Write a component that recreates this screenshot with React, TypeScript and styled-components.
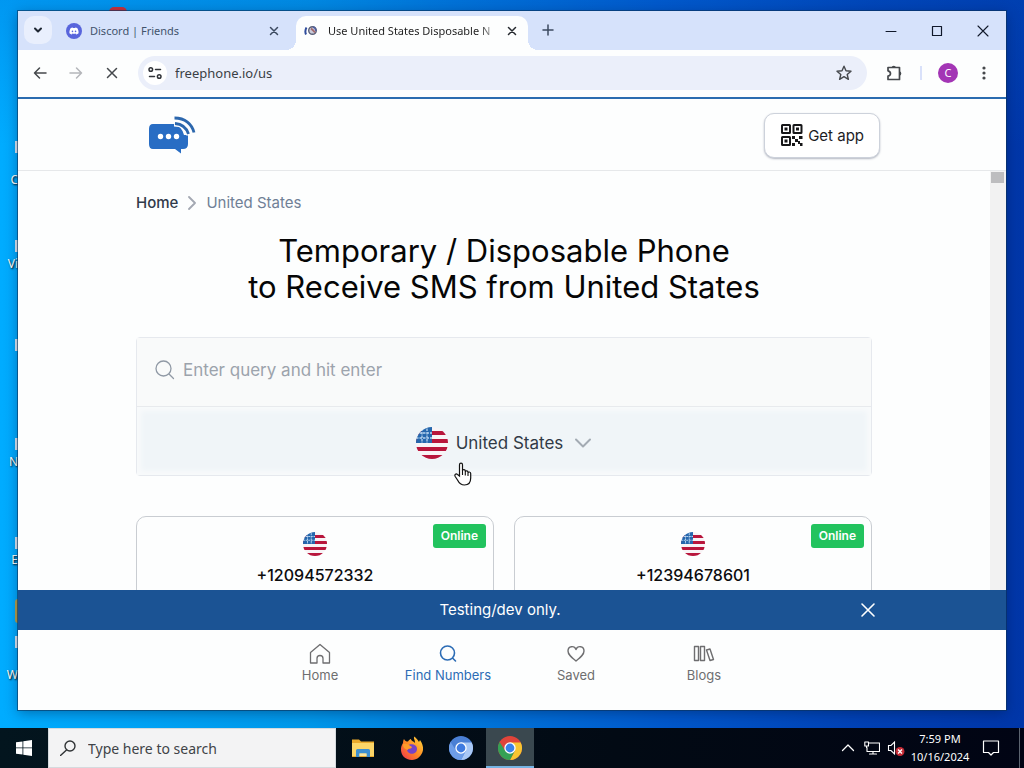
import React from "react";
import styled, { createGlobalStyle } from "styled-components";
import { FaDiscord } from "react-icons/fa";

const ui = `"Noto Sans", "Open Sans", sans-serif`;
const site = `Inter, "Liberation Sans", sans-serif`;

const Global = createGlobalStyle`
  *, *::before, *::after { box-sizing: border-box; }
  body { margin: 0; overflow: hidden; font-family: ${ui}; }
  button, input, select { font: inherit; color: inherit; border: 0; padding: 0; margin: 0; background: none; outline: none; }
  button { cursor: pointer; display: flex; align-items: center; justify-content: center; }
  a { text-decoration: none; color: inherit; }
  svg { display: block; flex: none; }
  h1 { margin: 0; }
`;

/* ---------- Desktop ---------- */

const Screen = styled.div`
  height: 100vh;
  display: flex;
  flex-direction: column;
`;

const Desktop = styled.main`
  position: relative;
  flex: 1;
  min-height: 0;
  padding: 11px 18px 18px;
  display: flex;
  background:
    linear-gradient(to bottom, rgba(0, 90, 200, 0.25), rgba(0, 90, 200, 0) 20%),
    linear-gradient(to right, #00acff 0%, #0098ea 30%, #0078dc 45%, #0058cc 65%, #0040b4 85%, #0036a8 100%);
`;

const Shortcuts = styled.div`
  position: absolute;
  inset: 0 auto 0 0;
  width: 18px;
  overflow: hidden;
`;

const ShortcutLabel = styled.span<{ $top: number }>`
  position: absolute;
  right: 0;
  top: ${(p) => p.$top}px;
  font-size: 12px;
  line-height: 16px;
  color: #fff;
  text-shadow: 1px 1px 2px #000;
`;

const ShortcutIcon = styled.span<{ $top: number; $color?: string }>`
  position: absolute;
  right: 0;
  top: ${(p) => p.$top}px;
  width: 3px;
  height: ${(p) => (p.$color ? 24 : 12)}px;
  border-radius: ${(p) => (p.$color ? "3px 0 0 3px" : "0")};
  background: ${(p) => p.$color ?? "#dfe9f2"};
`;

const TopShortcut = styled.span`
  position: absolute;
  top: 7px;
  left: 109px;
  width: 18px;
  height: 5px;
  border-radius: 9px 9px 0 0;
  background: #c8323c;
`;

const Window = styled.section`
  position: relative;
  flex: 1;
  min-width: 0;
  display: flex;
  flex-direction: column;
  background: #fff;
  box-shadow: 0 0 0 1px rgba(10, 50, 90, 0.6), 0 3px 12px rgba(0, 20, 60, 0.4);
`;

/* ---------- Browser chrome ---------- */

const TitleBar = styled.header`
  height: 39px;
  flex: none;
  display: flex;
  align-items: flex-end;
  padding-left: 6px;
  background: #d6e2fb;
`;

const TabSearch = styled.button`
  width: 28px;
  height: 28px;
  margin-bottom: 6px;
  border-radius: 10px;
  background: #e9effd;
`;

const Tab = styled.div<{ $active?: boolean }>`
  position: relative;
  width: 232px;
  height: 34px;
  margin-left: 6px;
  padding: 0 8px 4px;
  display: flex;
  align-items: center;
  gap: 8px;
  font-size: 11px;
  color: ${(p) => (p.$active ? "#1f1f1f" : "#42536c")};
  background: ${(p) => (p.$active ? "#fdfefe" : "transparent")};
  border-radius: 10px 10px 0 0;
  &::before,
  &::after {
    content: "";
    display: ${(p) => (p.$active ? "block" : "none")};
    position: absolute;
    bottom: 0;
    width: 10px;
    height: 10px;
  }
  &::before {
    left: -10px;
    background: radial-gradient(circle at 0 0, transparent 10px, #fdfefe 10px);
  }
  &::after {
    right: -10px;
    background: radial-gradient(circle at 100% 0, transparent 10px, #fdfefe 10px);
  }
`;

const TabTitle = styled.span<{ $fade?: boolean }>`
  flex: 1;
  min-width: 0;
  overflow: hidden;
  white-space: nowrap;
  line-height: 20px;
  mask-image: ${(p) => (p.$fade ? "linear-gradient(to right, #000 90%, rgba(0, 0, 0, 0.2))" : "none")};
`;

const TabClose = styled.button`
  width: 16px;
  height: 16px;
`;

const NewTab = styled.button`
  width: 28px;
  height: 28px;
  margin: 0 0 6px 6px;
`;

const WindowControls = styled.div`
  display: flex;
  align-self: stretch;
  margin-left: auto;
`;

const WindowButton = styled.button`
  width: 46px;
`;

const Toolbar = styled.div`
  height: 49px;
  flex: none;
  display: flex;
  align-items: center;
  padding: 0 4px 2px;
  background: #fdfefe;
  border-bottom: 2px solid #2b6cb0;
`;

const ToolButton = styled.button`
  width: 36px;
  height: 34px;
`;

const AddressBar = styled.div`
  flex: 1;
  height: 34px;
  margin: 0 9px 0 8px;
  padding: 0 5px;
  display: flex;
  align-items: center;
  gap: 8px;
  border-radius: 17px;
  background: #ebeffa;
`;

const SiteInfo = styled.button`
  width: 24px;
  height: 24px;
  border-radius: 12px;
  background: #fff;
`;

const Address = styled.input`
  flex: 1;
  min-width: 0;
  height: 24px;
  font-size: 13px;
  color: #3a3f45;
`;

const StarButton = styled.button`
  width: 36px;
  height: 28px;
`;

const Divider = styled.span`
  width: 2px;
  height: 14px;
  margin: 0 8px;
  background: #d9e1fa;
`;

const Profile = styled.button`
  width: 20px;
  height: 20px;
  margin: 0 8px;
  border-radius: 10px;
  background: #a335b5;
  color: #fff;
  font-size: 11px;
`;

/* ---------- Site ---------- */

const Page = styled.div`
  flex: 1;
  min-height: 0;
  display: flex;
  flex-direction: column;
  font-family: ${site};
  background: #fdfefe;
`;

const SiteHeader = styled.header`
  height: 72px;
  flex: none;
  border-bottom: 1px solid #e6e8ea;
`;

const HeaderInner = styled.div`
  height: 100%;
  max-width: 768px;
  margin: 0 auto;
  padding: 1px 16px 0 20px;
  display: flex;
  align-items: center;
  justify-content: space-between;
`;

const GetApp = styled.button`
  height: 45px;
  padding: 0 15px;
  gap: 5px;
  border: 1px solid #cdd2db;
  border-radius: 10px;
  box-shadow: 0 1px 2px rgba(40, 50, 80, 0.35);
  background: #fff;
  color: #1c1c1f;
  font-size: 15px;
`;

const Scroller = styled.div`
  flex: 1;
  min-height: 0;
  display: flex;
`;

const Content = styled.div`
  flex: 1;
  min-width: 0;
  overflow: hidden;
`;

const ScrollTrack = styled.div`
  width: 16px;
  padding: 1px 2px 0 1px;
  background: #f2f2f2;
`;

const ScrollThumb = styled.div`
  height: 11px;
  background: #bdbdbf;
`;

const Column = styled.div`
  max-width: 736px;
  margin: 0 auto;
`;

const Breadcrumb = styled.nav`
  padding-top: 22px;
  display: flex;
  align-items: center;
  gap: 9px;
  font-size: 15px;
  line-height: 20px;
  color: #708096;
`;

const Crumb = styled.a`
  color: #303a4a;
  font-weight: 500;
`;

const Title = styled.h1`
  padding-top: 20px;
  text-align: center;
  font-size: 31px;
  line-height: 36px;
  font-weight: 400;
  color: #060606;
`;

const Filters = styled.div`
  margin-top: 32px;
  border: 1px solid #e6e9ee;
  border-radius: 4px;
`;

const Query = styled.label`
  height: 69px;
  padding: 0 17px 5px;
  display: flex;
  align-items: center;
  gap: 8px;
  background: #f9fafa;
  border-bottom: 1px solid #e8eaed;
`;

const QueryInput = styled.input`
  flex: 1;
  height: 32px;
  font-size: 17px;
  color: #30343a;
  &::placeholder {
    color: #9ca3ac;
    opacity: 1;
  }
`;

const Country = styled.label`
  position: relative;
  height: 68px;
  padding-top: 4px;
  display: flex;
  align-items: center;
  justify-content: center;
  gap: 8px;
  background: #f0f5f8;
  box-shadow: inset 0 0 5px 4px #f8fafb;
`;

const CountrySelect = styled.select`
  appearance: none;
  field-sizing: content;
  font-size: 17px;
  line-height: 24px;
  color: #303a46;
`;

const Chevron = styled.span`
  padding-left: 3px;
`;

const Cursor = styled.span`
  position: absolute;
  left: calc(50% - 50px);
  top: 55px;
  z-index: 2;
`;

const Cards = styled.div`
  margin-top: 40px;
  display: grid;
  grid-template-columns: 1fr 1fr;
  gap: 20px;
`;

const Card = styled.a`
  position: relative;
  height: 140px;
  padding-top: 15px;
  display: flex;
  flex-direction: column;
  align-items: center;
  gap: 7px;
  border: 1px solid #c9cdd2;
  border-radius: 10px;
  font-size: 16px;
  line-height: 24px;
  font-weight: 500;
  color: #0c0c0e;
`;

const Badge = styled.span`
  position: absolute;
  top: 7px;
  right: 7px;
  padding: 0 8px;
  border-radius: 3px;
  background: #22c35e;
  color: #fff;
  font-size: 12px;
  font-weight: 600;
  line-height: 24px;
`;

const Banner = styled.div`
  height: 40px;
  flex: none;
  background: #1b5394;
  color: #fff;
`;

const BannerInner = styled.div`
  height: 100%;
  max-width: 768px;
  margin: 0 auto;
  padding: 0 16px;
  display: flex;
  align-items: center;
`;

const BannerText = styled.span`
  flex: 1;
  text-align: center;
  font-size: 15px;
  line-height: 20px;
`;

const BannerClose = styled.button`
  width: 24px;
  height: 24px;
`;

const BottomNav = styled.nav`
  height: 80px;
  flex: none;
  padding-top: 12px;
  display: flex;
  justify-content: center;
`;

const NavItem = styled.a<{ $active?: boolean }>`
  width: 128px;
  display: flex;
  flex-direction: column;
  align-items: center;
  font-size: 13px;
  line-height: 18px;
  color: ${(p) => (p.$active ? "#2c6cb5" : "#6e6e70")};
`;

/* ---------- Taskbar ---------- */

const Taskbar = styled.footer`
  height: 40px;
  flex: none;
  display: flex;
  background: linear-gradient(to right, #03151e, #020a14 60%, #010414);
  color: #fff;
`;

const Start = styled.button`
  width: 48px;
`;

const Search = styled.label`
  width: 288px;
  margin-right: 3px;
  padding: 0 11px;
  display: flex;
  align-items: center;
  gap: 12px;
  background: #f3f3f4;
  border: 1px solid #d5dade;
  color: #303336;
`;

const SearchInput = styled.input`
  flex: 1;
  min-width: 0;
  height: 30px;
  font-size: 14px;
  &::placeholder {
    color: #404347;
    opacity: 1;
  }
`;

const AppButton = styled.button<{ $active?: boolean }>`
  width: 48px;
  margin-right: 1px;
  background: ${(p) => (p.$active ? "#3a484f" : "transparent")};
  box-shadow: ${(p) => (p.$active ? "inset 0 -2px #76b4e4" : "none")};
`;

const Tray = styled.div`
  margin-left: auto;
  display: flex;
  align-items: center;
`;

const TrayButton = styled.button`
  width: 24px;
  height: 40px;
`;

const Clock = styled.time`
  width: 64px;
  text-align: center;
  font-size: 11px;
  line-height: 18px;
  white-space: nowrap;
`;

const Notifications = styled.button`
  width: 38px;
  height: 40px;
  margin-right: 9px;
`;

const ShowDesktop = styled.button`
  width: 5px;
  height: 40px;
  border-left: 1px solid #5c6470;
`;

/* ---------- Drawings ---------- */

type GlyphProps = { d: string; size?: number; box?: number; width?: number; color?: string };

const Glyph = ({ d, size = 16, box = 16, width = 1.5, color = "currentColor" }: GlyphProps) => (
  <svg width={size} height={size} viewBox={`0 0 ${box} ${box}`} fill="none" stroke={color} strokeWidth={width} strokeLinecap="round" strokeLinejoin="round">
    <path d={d} />
  </svg>
);

const cross = "M4.500 4.500L11.500 11.500M11.500 4.500L4.500 11.500";

const Flag = ({ size, id }: { size: number; id: string }) => (
  <svg width={size} height={size} viewBox="0 0 32 32">
    <clipPath id={id}>
      <circle cx="16" cy="16" r="16" />
    </clipPath>
    <g clipPath={`url(#${id})`}>
      <rect width="32" height="32" fill="#f8f4f6" />
      {[4, 12, 20, 28].map((y) => (
        <rect key={y} y={y} width="32" height="4" fill="#b8163c" />
      ))}
      <rect width="16" height="16" fill="#2567ad" />
      <path d="M6 1.500V16M11 1.500V16M0 6H16M0 11H16" stroke="#b5d3ef" strokeWidth="1.300" strokeDasharray="2.500 1" />
    </g>
  </svg>
);

const Logo = () => (
  <svg width="48" height="40" viewBox="0 0 48 40">
    <path d="M5 9H26Q33 10 36 20H40V29Q40 34 35 34H33V38.500L27 34H5Q1 34 1 29V14Q1 9 5 9Z" fill="#286dc4" />
    <circle cx="12.500" cy="21.500" r="2.700" fill="#fff" />
    <circle cx="20.500" cy="21.500" r="2.700" fill="#fff" />
    <circle cx="28.500" cy="21.500" r="2.700" fill="#fff" />
    <path d="M26 8.500C34 8.500 40 13 41.500 20" stroke="#fff" strokeWidth="6" fill="none" />
    <path d="M27 8.500C34 9 38.500 13 40.500 19M26.500 3C37 3 44 9 46 17.500" stroke="#2c67ad" strokeWidth="2.800" fill="none" />
  </svg>
);

const QrCode = () => (
  <svg width="23" height="22" viewBox="0 0 23 22">
    <g fill="none" stroke="#161618" strokeWidth="2">
      <rect x="2" y="1" width="8" height="8" rx="0.500" />
      <rect x="13.500" y="1" width="8" height="8" rx="0.500" />
      <rect x="2" y="13" width="8" height="8" rx="0.500" />
    </g>
    <path fill="#161618" d="M4.500 3.500h3v3h-3zM16 3.500h3v3h-3zM4.500 15.500h3v3h-3zM12 12h3v3h-3zM15 15h3v3h-3zM19 12h3.500v3H19zM12 19h3v3h-3zM18 17h2v3h-2zM20 19h2.500v3H20z" />
  </svg>
);

const ChromeLogo = ({ mono }: { mono?: boolean }) => {
  const [a, b, c, core] = mono ? ["#4a7fd4", "#a9c8f5", "#6d9de8", "#3f7be0"] : ["#e0443a", "#f7c531", "#35a155", "#3b82ea"];
  return (
    <svg width="24" height="24" viewBox="0 0 24 24">
      <circle cx="12" cy="12" r="12" fill={a} />
      <path d="M12 6.500H22.700A12 12 0 0 1 12 24L16.800 14.800Z" fill={b} />
      <path d="M1.600 6A12 12 0 0 0 12 24L16.800 14.800L7.200 14.800Z" fill={c} />
      <circle cx="12" cy="12" r="5.700" fill="#fff" />
      <circle cx="12" cy="12" r="4.400" fill={core} />
    </svg>
  );
};

const Firefox = () => (
  <svg width="24" height="24" viewBox="0 0 24 24">
    <defs>
      <linearGradient id="fox" x1="1" y1="0" x2="0" y2="1">
        <stop offset="0" stopColor="#ffdc3e" />
        <stop offset="0.5" stopColor="#ff8a24" />
        <stop offset="1" stopColor="#f0304f" />
      </linearGradient>
    </defs>
    <path d="M4 3C5 5 6 5.500 8 5.500C9 3.500 11 3 11 3C11 5 14 5.500 15 7C15 3 13 2.500 14.500 0.500C17 3 18 4 19 6L20 4C22 7 23.500 10 23 14C22 20 17 24 12 24C5 24 0.500 19 1 12.500C1.300 10 2 8.500 3 7C3 5.500 3.500 4 4 3Z" fill="url(#fox)" />
    <path d="M7 10C10 7 17 8 17 13C17 17 13 18.500 10 17.500C7.500 16.500 7 14.500 7 13L11 12.500L12 11Z" fill="#7543c7" />
    <path d="M3 8C7 7 8 8 12 11C10 13 8 12 8 14C4 13 3 11 3 8Z" fill="#ff9b2a" />
  </svg>
);

const Folder = () => (
  <svg width="24" height="24" viewBox="0 0 24 24">
    <path d="M1 3.500H8L10 5.500H23V21H1Z" fill="#e9a92c" />
    <path d="M1 7H23V20H1Z" fill="#fbd568" />
    <path d="M5 21V14.500Q5 13 6.500 13H17.500Q19 13 19 14.500V21H15.500V17.500H8.500V21Z" fill="#3d8fd0" />
    <path d="M8.500 17.500H15.500V20H8.500Z" fill="#fbe6a2" />
  </svg>
);

const Hand = () => (
  <svg width="18" height="24" viewBox="0 0 18 24">
    <path d="M5.500 14V2.700C5.500 0.500 8.500 0.500 8.500 2.700V9C8.500 7 11.300 7.200 11.300 9V10C11.300 8.300 14 8.500 14 10V11C14 9.500 16.700 9.700 16.700 11.500V16C16.700 20.500 14.500 23 10.500 23C6.500 23 5 21 3.500 18L1.200 14.500C0.200 12.500 2 11.300 3.500 12.500Z" fill="#fff" stroke="#111" strokeWidth="1.200" />
    <path d="M8.500 9V13M11.300 10V13.500M14 11V14" stroke="#111" strokeWidth="1.100" />
  </svg>
);

const Favicon = () => (
  <svg width="16" height="16" viewBox="0 0 16 16" fill="none">
    <path d="M2.500 4.500Q0.500 8 2 11.500" stroke="#2f4c9c" strokeWidth="2" />
    <circle cx="8.500" cy="7.500" r="3.800" stroke="#5a5f78" strokeWidth="1.400" fill="#c9ccdc" />
    <path d="M7 5.500Q9 7 11 9.500" stroke="#a2686d" strokeWidth="1.800" />
    <path d="M9 4Q11.500 4.500 12 8" stroke="#4f5fa0" strokeWidth="1.400" />
  </svg>
);

const cards = ["+12094572332", "+12394678601"];

export default function App() {
  return (
    <Screen>
      <Global />
      <Desktop>
        <Shortcuts>
          <ShortcutIcon $top={141} />
          <ShortcutLabel $top={172}>C</ShortcutLabel>
          <ShortcutIcon $top={240} />
          <ShortcutLabel $top={256}>Vi</ShortcutLabel>
          <ShortcutIcon $top={339} />
          <ShortcutIcon $top={438} />
          <ShortcutLabel $top={454}>N</ShortcutLabel>
          <ShortcutIcon $top={537} />
          <ShortcutLabel $top={552}>E</ShortcutLabel>
          <ShortcutIcon $top={599} $color="#b9a048" />
          <ShortcutIcon $top={636} />
          <ShortcutLabel $top={667}>W</ShortcutLabel>
        </Shortcuts>
        <TopShortcut />
        <Window>
          <TitleBar>
            <TabSearch aria-label="Search tabs">
              <Glyph d="M5 6.500L8 9.500L11 6.500" width={2} color="#1f2733" />
            </TabSearch>
            <Tab>
              <svg width="16" height="16" viewBox="0 0 16 16">
                <circle cx="8" cy="8" r="8" fill="#5865dc" />
                <FaDiscord x={3} y={3} size={10} color="#fff" />
              </svg>
              <TabTitle>Discord | Friends</TabTitle>
              <TabClose aria-label="Close Discord tab">
                <Glyph d={cross} color="#3c4a60" />
              </TabClose>
            </Tab>
            <Tab $active>
              <Favicon />
              <TabTitle $fade>Use United States Disposable N</TabTitle>
              <TabClose aria-label="Close tab">
                <Glyph d={cross} color="#26292e" />
              </TabClose>
            </Tab>
            <NewTab aria-label="New tab">
              <Glyph d="M8 3V13M3 8H13" color="#3c4a60" />
            </NewTab>
            <WindowControls>
              <WindowButton aria-label="Minimize">
                <Glyph d="M3 8.500H13" width={1} color="#10182a" />
              </WindowButton>
              <WindowButton aria-label="Maximize">
                <Glyph d="M3.500 3.500H12.500V12.500H3.500Z" width={1.2} color="#10182a" />
              </WindowButton>
              <WindowButton aria-label="Close window">
                <Glyph d="M3 3L13 13M13 3L3 13" width={1.1} color="#10182a" />
              </WindowButton>
            </WindowControls>
          </TitleBar>

          <Toolbar>
            <ToolButton aria-label="Back">
              <Glyph d="M14 8H2.500M7.500 3L2.500 8L7.500 13" color="#45484c" />
            </ToolButton>
            <ToolButton aria-label="Forward">
              <Glyph d="M2 8H13.500M8.500 3L13.500 8L8.500 13" color="#b4b6ba" />
            </ToolButton>
            <ToolButton aria-label="Stop loading">
              <Glyph d="M3.500 3.500L12.500 12.500M12.500 3.500L3.500 12.500" color="#45484c" />
            </ToolButton>
            <AddressBar>
              <SiteInfo aria-label="View site information">
                <Glyph d="M2 4.500A1.800 1.800 0 1 0 5.600 4.500A1.800 1.800 0 1 0 2 4.500M8.500 4.500H13.500M10.400 11.500A1.800 1.800 0 1 0 14 11.500A1.800 1.800 0 1 0 10.400 11.500M2.500 11.500H7.500" color="#303338" />
              </SiteInfo>
              <Address aria-label="Address" defaultValue="freephone.io/us" />
              <StarButton aria-label="Bookmark this tab">
                <Glyph d="M8 1.200L10 5.800L15 6.200L11.200 9.500L12.400 14.300L8 11.700L3.600 14.300L4.800 9.500L1 6.200L6 5.800Z" width={1.4} color="#45484c" />
              </StarButton>
            </AddressBar>
            <ToolButton aria-label="Extensions">
              <svg width="18" height="18" viewBox="0 0 18 18" fill="none">
                <path d="M3 3.500H14.500V15.500H3V12.200C6.300 11.500 6.300 7.500 3 6.800Z" stroke="#45484c" strokeWidth="1.700" strokeLinejoin="round" />
                <path d="M6.500 3.500A2.300 2.300 0 0 1 11 3.500ZM14.500 7.200A2.300 2.300 0 0 1 14.500 11.700Z" fill="#45484c" />
              </svg>
            </ToolButton>
            <Divider />
            <Profile aria-label="Profile C">C</Profile>
            <ToolButton aria-label="Menu">
              <svg width="16" height="16" fill="#45484c">
                <circle cx="8" cy="3" r="1.600" />
                <circle cx="8" cy="8" r="1.600" />
                <circle cx="8" cy="13" r="1.600" />
              </svg>
            </ToolButton>
          </Toolbar>

          <Page>
            <SiteHeader>
              <HeaderInner>
                <a href="#top" aria-label="Freephone">
                  <Logo />
                </a>
                <GetApp>
                  <QrCode />
                  Get app
                </GetApp>
              </HeaderInner>
            </SiteHeader>

            <Scroller>
              <Content>
                <Column>
                  <Breadcrumb>
                    <Crumb href="#home">Home</Crumb>
                    <svg width="10" height="14" viewBox="0 0 10 14" fill="none">
                      <path d="M2 1L8 7L2 13" stroke="#a3a8b2" strokeWidth="1.800" strokeLinecap="round" strokeLinejoin="round" />
                    </svg>
                    <span>United States</span>
                  </Breadcrumb>
                  <Title>
                    Temporary / Disposable Phone
                    <br />
                    to Receive SMS from United States
                  </Title>
                  <Filters>
                    <Query>
                      <Glyph size={21} box={21} d="M2 9.500A7.500 7.500 0 1 0 17 9.500A7.500 7.500 0 1 0 2 9.500M15 15L19.500 19.500" width={1.3} color="#9099a5" />
                      <QueryInput aria-label="Search" placeholder="Enter query and hit enter" />
                    </Query>
                    <Country>
                      <Flag size={32} id="flag-filter" />
                      <CountrySelect aria-label="Country">
                        <option>United States</option>
                      </CountrySelect>
                      <Chevron>
                        <Glyph size={18} box={18} d="M2 5.500L9 12.500L16 5.500" width={2} color="#a3abb3" />
                      </Chevron>
                      <Cursor>
                        <Hand />
                      </Cursor>
                    </Country>
                  </Filters>
                  <Cards>
                    {cards.map((number) => (
                      <Card key={number} href="#number">
                        <Flag size={24} id={`flag-${number.slice(1)}`} />
                        {number}
                        <Badge>Online</Badge>
                      </Card>
                    ))}
                  </Cards>
                </Column>
              </Content>
              <ScrollTrack>
                <ScrollThumb />
              </ScrollTrack>
            </Scroller>

            <Banner>
              <BannerInner>
                <BannerText>Testing/dev only.</BannerText>
                <BannerClose aria-label="Dismiss">
                  <Glyph d="M2 2L14 14M14 2L2 14" width={1.6} />
                </BannerClose>
              </BannerInner>
            </Banner>

            <BottomNav>
              <NavItem href="#home">
                <Glyph size={24} box={24} d="M2.500 10.500L12 2.500L21.500 10.500V21H15V16.500A3 3 0 0 0 9 16.500V21H2.500Z" width={1.3} />
                Home
              </NavItem>
              <NavItem href="#find" $active>
                <Glyph size={24} box={24} d="M4.500 11A7 7 0 1 0 18.500 11A7 7 0 1 0 4.500 11M16.500 16L19.500 19" width={1.6} />
                Find Numbers
              </NavItem>
              <NavItem href="#saved">
                <Glyph size={24} box={24} d="M12 19C7 15 4 12.500 4 9C4 3.500 10.500 3.500 12 7.500C13.500 3.500 20 3.500 20 9C20 12.500 17 15 12 19Z" width={1.4} />
                Saved
              </NavItem>
              <NavItem href="#blogs">
                <Glyph size={24} box={24} d="M2.500 4.500H6.500V18.500H2.500ZM8.500 4.500H12.500V18.500H8.500ZM14.500 8L18 7L21.500 17.500L18 18.500Z" width={1.4} />
                Blogs
              </NavItem>
            </BottomNav>
          </Page>
        </Window>
      </Desktop>

      <Taskbar>
        <Start aria-label="Start">
          <svg width="16" height="16" viewBox="0 0 16 16" fill="#fff">
            <path d="M0 2.300L6.500 1.400V7.500H0ZM7.300 1.300L16 0V7.500H7.300ZM0 8.300H6.500V14.600L0 13.700ZM7.300 8.300H16V16L7.300 14.700Z" />
          </svg>
        </Start>
        <Search>
          <Glyph d="M5 6A5 5 0 1 0 15 6A5 5 0 1 0 5 6M6.500 10L0.500 15.500" width={1.4} />
          <SearchInput aria-label="Search Windows" placeholder="Type here to search" />
        </Search>
        <AppButton aria-label="File Explorer">
          <Folder />
        </AppButton>
        <AppButton aria-label="Firefox">
          <Firefox />
        </AppButton>
        <AppButton aria-label="Chromium">
          <ChromeLogo mono />
        </AppButton>
        <AppButton aria-label="Chrome" $active>
          <ChromeLogo />
        </AppButton>
        <Tray>
          <TrayButton aria-label="Show hidden icons">
            <Glyph d="M2.500 10.500L8 5L13.500 10.500" width={1.3} />
          </TrayButton>
          <TrayButton aria-label="Network">
            <Glyph d="M4.500 3H15.500V11.500H3V7.500M9 11.500V14M5.500 14H12.500M0.800 2H4.500V6H0.800ZM2.500 6V7.500" width={1.1} />
          </TrayButton>
          <TrayButton aria-label="Volume muted">
            <svg width="18" height="16" viewBox="0 0 18 16" fill="none">
              <path d="M1.500 5.500H4L7.500 2V14L4 10.500H1.500Z" stroke="#fff" strokeWidth="1.100" />
              <circle cx="13" cy="11.500" r="4.500" fill="#c42b35" />
              <path d="M11 9.500L15 13.500M15 9.500L11 13.500" stroke="#fff" strokeWidth="1.300" />
            </svg>
          </TrayButton>
          <Clock>
            7:59 PM
            <br />
            10/16/2024
          </Clock>
          <Notifications aria-label="Notifications">
            <Glyph size={18} box={18} d="M1.500 2H16.500V13.500H11.500L9 16L6.500 13.500H1.500Z" width={1.2} />
          </Notifications>
          <ShowDesktop aria-label="Show desktop" />
        </Tray>
      </Taskbar>
    </Screen>
  );
}
